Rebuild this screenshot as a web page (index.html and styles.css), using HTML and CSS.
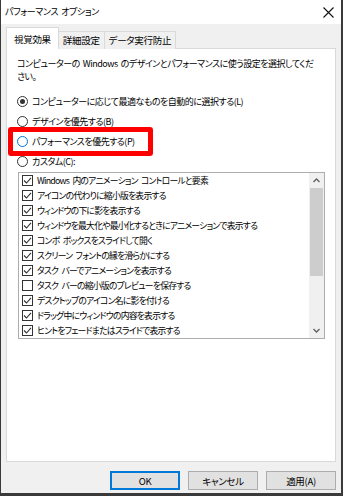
FILE: index.html
```html
<!DOCTYPE html>
<html lang="ja">
<head>
<meta charset="utf-8">
<link rel="stylesheet" href="styles.css">
</head>
<body>
<div class="window">
  <div class="titlebar">
    <span class="title">パフォーマンス オプション</span>
    <svg class="close" width="11" height="11" viewBox="0 0 11 11"><path d="M0.5 0.5 L10.5 10.5 M10.5 0.5 L0.5 10.5" stroke="#111" stroke-width="1.1" fill="none"/></svg>
  </div>
  <div class="body">
    <div class="tabs">
      <div class="tab active">視覚効果</div>
      <div class="tab">詳細設定</div>
      <div class="tab">データ実行防止</div>
    </div>
    <div class="panel">
      <p class="desc">コンピューターの Windows のデザインとパフォーマンスに使う設定を選択してくだ<br>さい。</p>
      <div class="radios">
        <div class="radio"><span class="ring checked"></span><span>コンピューターに応じて最適なものを自動的に選択する(L)</span></div>
        <div class="radio"><span class="ring"></span><span>デザインを優先する(B)</span></div>
        <div class="radio highlighted"><span class="ring hover"></span><span>パフォーマンスを優先する(P)</span><span class="mark"></span></div>
        <div class="radio"><span class="ring"></span><span>カスタム(C):</span></div>
      </div>
      <div class="listbox">
        <ul class="items">
          <li><span class="cb on"></span>Windows 内のアニメーション コントロールと要素</li>
          <li><span class="cb on"></span>アイコンの代わりに縮小版を表示する</li>
          <li><span class="cb on"></span>ウィンドウの下に影を表示する</li>
          <li><span class="cb on"></span>ウィンドウを最大化や最小化するときにアニメーションで表示する</li>
          <li><span class="cb on"></span>コンボ ボックスをスライドして開く</li>
          <li><span class="cb on"></span>スクリーン フォントの縁を滑らかにする</li>
          <li><span class="cb on"></span>タスク バーでアニメーションを表示する</li>
          <li><span class="cb"></span>タスク バーの縮小版のプレビューを保存する</li>
          <li><span class="cb on"></span>デスクトップのアイコン名に影を付ける</li>
          <li><span class="cb on"></span>ドラッグ中にウィンドウの内容を表示する</li>
          <li><span class="cb on"></span>ヒントをフェードまたはスライドで表示する</li>
        </ul>
        <div class="scrollbar">
          <div class="arrow"><svg width="7" height="5" viewBox="0 0 7 5"><path d="M0.5 4 L3.5 1 L6.5 4" stroke="#606060" stroke-width="1.3" fill="none"/></svg></div>
          <div class="thumb"></div>
          <div class="track"></div>
          <div class="arrow"><svg width="7" height="5" viewBox="0 0 7 5"><path d="M0.5 1 L3.5 4 L6.5 1" stroke="#606060" stroke-width="1.3" fill="none"/></svg></div>
        </div>
      </div>
    </div>
    <div class="buttons">
      <button class="btn default">OK</button>
      <button class="btn">キャンセル</button>
      <button class="btn">適用(A)</button>
    </div>
  </div>
</div>
</body>
</html>
```

FILE: styles.css
```css
* { box-sizing: border-box; }
html, body { margin: 0; padding: 0; }
body {
  width: 343px;
  height: 496px;
  overflow: hidden;
  font-family: "Noto Sans CJK JP", "Noto Sans", sans-serif;
  font-size: 9px;
  letter-spacing: -0.5px;
  word-spacing: 1.5px;
  font-feature-settings: "palt";
  color: #000;
  background: #f0f0f0;
}
.window {
  width: 343px;
  height: 496px;
  border-left: 1px solid #3a3a3a;
  border-right: 2px solid #3a3a3a;
  border-bottom: 3px solid #3a3a3a;
  display: flex;
  flex-direction: column;
  background: #f0f0f0;
}
.titlebar {
  height: 24px;
  background: #fff;
  display: flex;
  align-items: center;
  justify-content: space-between;
  padding: 0 7px 0 4px;
  flex: none;
}
.title { font-size: 9px; line-height: 24px; letter-spacing: -0.4px; }
.close { display: block; }
.body {
  flex: 1;
  display: flex;
  flex-direction: column;
  padding: 4px 5px 3px 5px;
}
.tabs {
  display: flex;
  align-items: flex-end;
  height: 21px;
  margin-bottom: -1px;
  position: relative;
  z-index: 1;
  font-size: 9.5px;
  letter-spacing: -0.3px;
}
.tab {
  height: 18px;
  line-height: 17px;
  padding: 0 4px;
  border: 1px solid #d9d9d9;
  border-bottom: none;
  background: #f0f0f0;
  margin-left: -1px;
}
.tab.active {
  height: 22px;
  line-height: 22px;
  background: #fff;
  padding: 0 7px;
  margin-left: 0;
  border-right: 1px solid #d9d9d9;
}
.tab.active + .tab { margin-left: 0; border-left: none; }
.panel {
  height: 414px;
  background: #fff;
  border: 1px solid #d9d9d9;
  padding: 8px 10px 0 10px;
  flex: none;
}
.desc {
  margin: 0;
  line-height: 13px;
}
.radios {
  margin-top: 8px;
  display: flex;
  flex-direction: column;
}
.radio {
  height: 20px;
  display: flex;
  align-items: center;
  gap: 4px;
  position: relative;
}
.ring {
  width: 11px;
  height: 11px;
  border: 1px solid #333;
  border-radius: 50%;
  background: #fff;
  display: flex;
  align-items: center;
  justify-content: center;
  flex: none;
}
.ring.checked::after {
  content: "";
  width: 5px;
  height: 5px;
  border-radius: 50%;
  background: #333;
}
.ring.hover { border-color: #0078d7; }
.mark {
  position: absolute;
  left: -9px;
  top: -4px;
  width: 145px;
  height: 29px;
  border: 5px solid #f00;
  border-radius: 3px;
}
.listbox {
  margin-top: 1px;
  margin-left: 1px;
  width: 307px;
  height: 167px;
  border: 1px solid #adadad;
  display: flex;
  background: #fff;
}
.items {
  list-style: none;
  margin: 0;
  padding: 0 0 0 3px;
  flex: 1;
  overflow: hidden;
  font-size: 8.8px;
  letter-spacing: -0.75px;
  word-spacing: 2px;
}
.items li {
  height: 15px;
  display: flex;
  align-items: center;
  white-space: nowrap;
}
.cb {
  width: 11px;
  height: 11px;
  border: 1px solid #333;
  margin-right: 4px;
  flex: none;
  background: #fff center / 9px 9px no-repeat;
}
.cb.on {
  background-image: url("data:image/svg+xml;utf8,<svg xmlns='http://www.w3.org/2000/svg' viewBox='0 0 9 9'><path d='M1 4.5 L3.5 7 L8 1.8' stroke='%23333' stroke-width='1.1' fill='none'/></svg>");
}
.scrollbar {
  width: 15px;
  flex: none;
  background: #f0f0f0;
  display: flex;
  flex-direction: column;
}
.arrow {
  height: 15px;
  display: flex;
  align-items: center;
  justify-content: center;
  flex: none;
}
.thumb {
  height: 88px;
  margin: 0 1px;
  background: #cdcdcd;
  flex: none;
}
.track { flex: 1; }
.buttons {
  margin-top: 9px;
  display: flex;
  justify-content: flex-end;
  gap: 8px;
}
.btn {
  width: 70px;
  height: 19px;
  font: inherit;
  font-size: 9.5px;
  letter-spacing: -0.3px;
  background: #e1e1e1;
  border: 1px solid #adadad;
  padding: 0;
  color: #000;
}
.btn.default { border: 2px solid #0078d7; }
```
